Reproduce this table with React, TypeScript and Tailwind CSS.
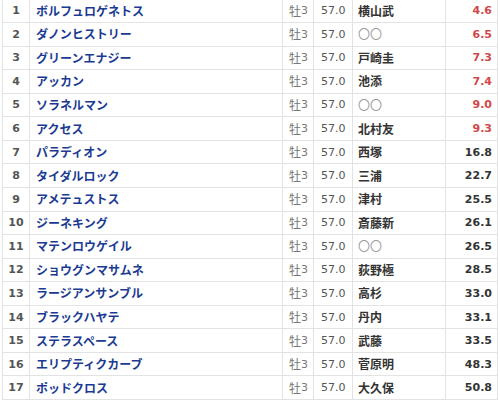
import React from "react";

interface Runner {
  no: number;
  name: string;
  jockey: string;
  odds: string;
}

const runners: Runner[] = [
  { no: 1, name: "ボルフュロゲネトス", jockey: "横山武", odds: "4.6" },
  { no: 2, name: "ダノンヒストリー", jockey: "〇〇", odds: "6.5" },
  { no: 3, name: "グリーンエナジー", jockey: "戸崎圭", odds: "7.3" },
  { no: 4, name: "アッカン", jockey: "池添", odds: "7.4" },
  { no: 5, name: "ソラネルマン", jockey: "〇〇", odds: "9.0" },
  { no: 6, name: "アクセス", jockey: "北村友", odds: "9.3" },
  { no: 7, name: "パラディオン", jockey: "西塚", odds: "16.8" },
  { no: 8, name: "タイダルロック", jockey: "三浦", odds: "22.7" },
  { no: 9, name: "アメテュストス", jockey: "津村", odds: "25.5" },
  { no: 10, name: "ジーネキング", jockey: "斎藤新", odds: "26.1" },
  { no: 11, name: "マテンロウゲイル", jockey: "〇〇", odds: "26.5" },
  { no: 12, name: "ショウグンマサムネ", jockey: "荻野極", odds: "28.5" },
  { no: 13, name: "ラージアンサンブル", jockey: "高杉", odds: "33.0" },
  { no: 14, name: "ブラックハヤテ", jockey: "丹内", odds: "33.1" },
  { no: 15, name: "ステラスペース", jockey: "武藤", odds: "33.5" },
  { no: 16, name: "エリプティクカーブ", jockey: "菅原明", odds: "48.3" },
  { no: 17, name: "ポッドクロス", jockey: "大久保", odds: "50.8" },
];

const cell = "flex items-center border-r border-b border-[#e3e3e3] h-[23.5625px]";
const num = "font-['DejaVu_Sans','Noto_Sans_CJK_JP',sans-serif] text-[11px]";

export default function App() {
  return (
    <div className="w-[500px] h-[402px] bg-white overflow-hidden">
      <div className="ml-[2px] mt-[-0.5625px] w-[496px] border-l border-[#e3e3e3] grid grid-cols-[27px_253px_31px_39px_93px_52px] text-[12px] leading-none font-['Noto_Sans_CJK_JP','Noto_Sans',sans-serif]">
        {runners.map((r) => (
          <React.Fragment key={r.no}>
            {/* number */}
            <div className={`${cell} ${num} justify-center font-bold text-[#555]`}>{r.no}</div>
            {/* horse */}
            <div className={`${cell} pl-[6px] font-bold text-[#1b3b92]`}>{r.name}</div>
            {/* sex / age */}
            <div className={`${cell} pl-[6px] text-[#777]`}>
              牡<span className={num}>3</span>
            </div>
            {/* weight */}
            <div className={`${cell} ${num} pl-[7px] text-[#555]`}>57.0</div>
            {/* jockey */}
            <div
              className={`${cell} pl-[5px] font-bold ${
                r.jockey === "〇〇" ? "text-[#999] font-normal" : "text-[#333]"
              }`}
            >
              {r.jockey}
            </div>
            {/* odds */}
            <div
              className={`${cell} ${num} justify-end pr-[5px] font-bold ${
                r.no <= 6 ? "text-[#d2474b]" : "text-[#333]"
              }`}
            >
              {r.odds}
            </div>
          </React.Fragment>
        ))}
      </div>
    </div>
  );
}
